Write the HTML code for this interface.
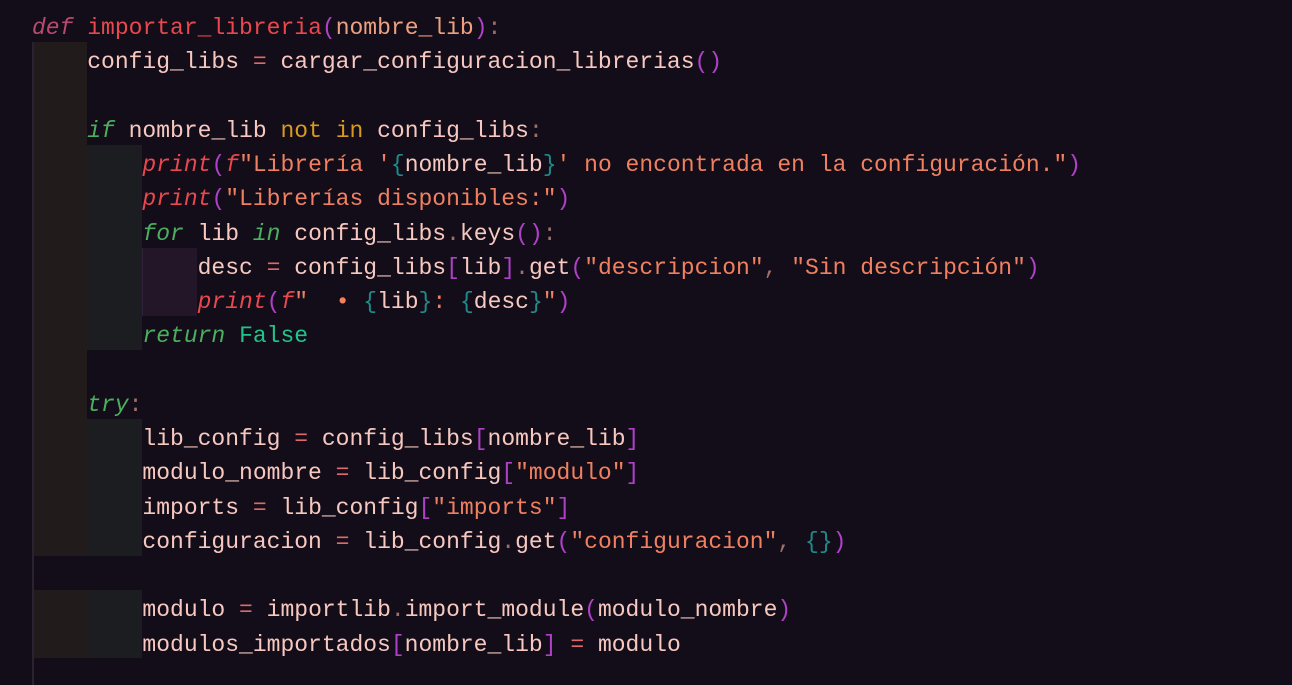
<!DOCTYPE html>
<html><head><meta charset="utf-8"><style>
html,body{margin:0;padding:0;background:#120d18;width:1292px;height:685px;overflow:hidden}
.b{position:absolute}
.code{position:absolute;left:32px;top:11px;font-family:"Liberation Mono",monospace;font-size:23px;line-height:34.25px;color:#f7c8c0;white-space:pre}
.kw{color:#4caf60;font-style:italic}
.df{color:#b84a70;font-style:italic}
.fn{color:#e8484e}
.pa{color:#eea080}
.pr{color:#e8484e;font-style:italic}
.st{color:#f08060}
.br{color:#b040c8}
.cb{color:#1f8a8a}
.op{color:#e06a6a}
.pu{color:#a07068}
.no{color:#d89a20}
.fa{color:#20c48a}
</style></head><body>
<div class="b" style="left:32px;top:42px;width:55px;height:514px;background:#221b1b;border-left:2px solid #2a2230;box-sizing:border-box"></div>
<div class="b" style="left:32px;top:590px;width:55px;height:68px;background:#221b1b;border-left:2px solid #2a2230;box-sizing:border-box"></div>
<div class="b" style="left:32px;top:556px;width:2px;height:34px;background:#2a2230"></div>
<div class="b" style="left:32px;top:658px;width:2px;height:27px;background:#2a2230"></div>
<div class="b" style="left:87px;top:145px;width:55px;height:205px;background:#1b1d20"></div>
<div class="b" style="left:87px;top:419px;width:55px;height:137px;background:#1b1d20"></div>
<div class="b" style="left:87px;top:590px;width:55px;height:68px;background:#1b1d20"></div>
<div class="b" style="left:142px;top:248px;width:55px;height:68px;background:#221628;border-left:1px solid #30203a;box-sizing:border-box"></div>
<div class="code"><span class="df">def</span> <span class="fn">importar_libreria</span><span class="br">(</span><span class="pa">nombre_lib</span><span class="br">)</span><span class="pu">:</span>
    config_libs <span class="op">=</span> cargar_configuracion_librerias<span class="br">()</span>

    <span class="kw">if</span> nombre_lib <span class="no">not</span> <span class="no">in</span> config_libs<span class="pu">:</span>
        <span class="pr">print</span><span class="br">(</span><span class="pr">f</span><span class="st">"Librería '</span><span class="cb">{</span>nombre_lib<span class="cb">}</span><span class="st">' no encontrada en la configuración."</span><span class="br">)</span>
        <span class="pr">print</span><span class="br">(</span><span class="st">"Librerías disponibles:"</span><span class="br">)</span>
        <span class="kw">for</span> lib <span class="kw">in</span> config_libs<span class="pu">.</span>keys<span class="br">()</span><span class="pu">:</span>
            desc <span class="op">=</span> config_libs<span class="br">[</span>lib<span class="br">]</span><span class="pu">.</span>get<span class="br">(</span><span class="st">"descripcion"</span><span class="pu">,</span> <span class="st">"Sin descripción"</span><span class="br">)</span>
            <span class="pr">print</span><span class="br">(</span><span class="pr">f</span><span class="st">"  • </span><span class="cb">{</span>lib<span class="cb">}</span><span class="st">: </span><span class="cb">{</span>desc<span class="cb">}</span><span class="st">"</span><span class="br">)</span>
        <span class="kw">return</span> <span class="fa">False</span>

    <span class="kw">try</span><span class="pu">:</span>
        lib_config <span class="op">=</span> config_libs<span class="br">[</span>nombre_lib<span class="br">]</span>
        modulo_nombre <span class="op">=</span> lib_config<span class="br">[</span><span class="st">"modulo"</span><span class="br">]</span>
        imports <span class="op">=</span> lib_config<span class="br">[</span><span class="st">"imports"</span><span class="br">]</span>
        configuracion <span class="op">=</span> lib_config<span class="pu">.</span>get<span class="br">(</span><span class="st">"configuracion"</span><span class="pu">,</span> <span class="cb">{}</span><span class="br">)</span>

        modulo <span class="op">=</span> importlib<span class="pu">.</span>import_module<span class="br">(</span>modulo_nombre<span class="br">)</span>
        modulos_importados<span class="br">[</span>nombre_lib<span class="br">]</span> <span class="op">=</span> modulo</div>
</body></html>
